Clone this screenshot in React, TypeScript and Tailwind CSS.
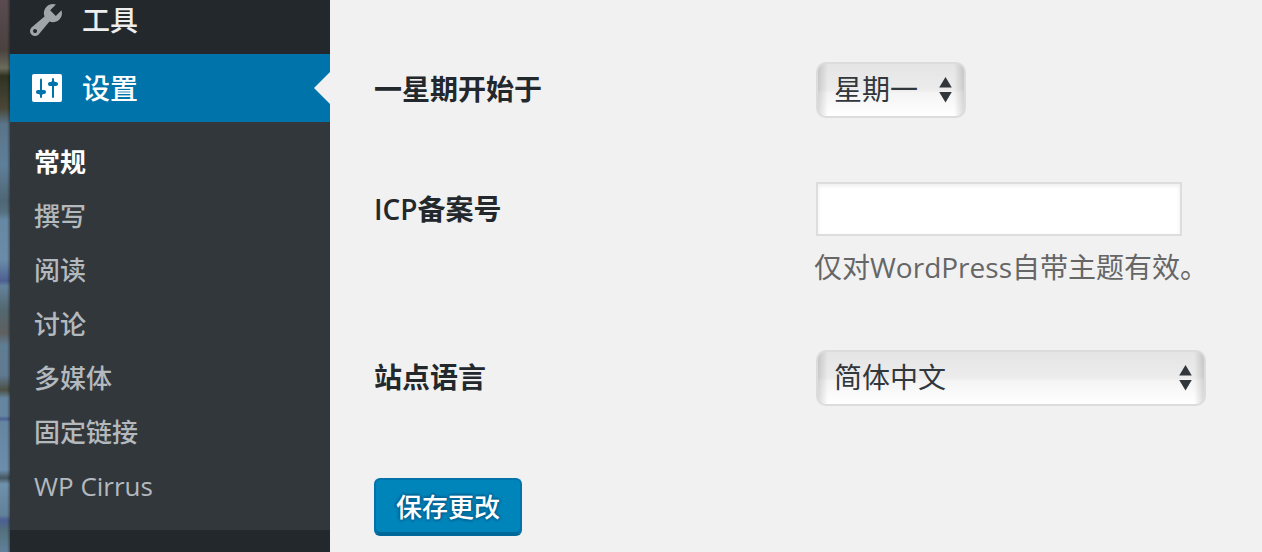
import type { ReactNode } from "react";

const submenu = ["常规", "撰写", "阅读", "讨论", "多媒体", "固定链接", "WP Cirrus"];

function itemStyle(item: string, current: boolean) {
  if (current) return "font-bold text-white";
  return /^[A-Za-z]/.test(item) ? "text-[#b4b9be]" : "font-medium text-[#b4b9be]";
}

function ToolsIcon() {
  return (
    <svg viewBox="0 0 20 20" className="size-10 shrink-0 fill-[#a0a5aa]" aria-hidden="true">
      <path d="M16.68 9.77c-1.34 1.34-3.3 1.67-4.95.99l-5.41 6.52c-.99.99-2.59.99-3.58 0s-.99-2.59 0-3.57l6.52-5.42c-.68-1.65-.35-3.61.99-4.95 1.28-1.28 3.12-1.62 4.72-1.06l-2.89 2.89 2.82 2.82 2.86-2.87c.53 1.58.18 3.39-1.08 4.65zM3.81 16.21c.4.39 1.04.39 1.43 0 .4-.4.4-1.04 0-1.43-.39-.4-1.03-.4-1.43 0-.39.39-.39 1.03 0 1.43z" />
    </svg>
  );
}

function SettingsIcon() {
  return (
    <svg viewBox="0 0 40 40" className="size-10 shrink-0" aria-hidden="true">
      <rect x="6" y="6" width="30" height="28" rx="2" fill="#fff" />
      <g fill="#0073aa">
        <rect x="14" y="10.5" width="2" height="19.5" rx="1" />
        <path d="M12 22h6c1.200 0 2 .8 2 2s-.8 2-2 2h-1l-2 2-2-2h-1c-1.200 0-2-.8-2-2s.8-2 2-2z" />
        <rect x="26" y="10" width="2" height="20" rx="1" />
        <path d="M24 18h6c1.200 0 2-.8 2-2s-.8-2-2-2h-1l-2-2-2 2h-1c-1.200 0-2 .8-2 2s.8 2 2 2z" />
      </g>
    </svg>
  );
}

function Select({ id, options, className }: { id: string; options: string[]; className: string }) {
  return (
    <div className={`relative h-14 max-w-full ${className}`}>
      <select
        id={id}
        className="size-full appearance-none rounded-[10px] border-2 border-[#dcdcdc] bg-[linear-gradient(to_right,rgba(0,0,0,0.14),transparent_10px),linear-gradient(to_left,rgba(0,0,0,0.14),transparent_10px),linear-gradient(to_bottom,#e5e5e5,#ececec_50%,#f4f4f4_55%,#ffffff)] pr-10 pb-0.5 pl-4 text-[28px] text-[#32373c]"
      >
        {options.map((o) => (
          <option key={o}>{o}</option>
        ))}
      </select>
      <svg viewBox="0 0 14 26" className="pointer-events-none absolute top-[15px] right-[13px] h-[26px] w-3.5 fill-[#32373c]" aria-hidden="true">
        <path d="M6.500 0 12.800 10.500H.2zM6.500 25.500 12.800 15H.2z" />
      </svg>
    </div>
  );
}

function Row({ id, label, className, children }: { id: string; label: string; className: string; children: ReactNode }) {
  return (
    <div className={`flex items-start ${className}`}>
      <label htmlFor={id} className="w-[442px] shrink-0 py-2 text-[28px] leading-[38px] font-semibold text-[#23282d]">
        {label}
      </label>
      <div className="min-w-0 flex-1">{children}</div>
    </div>
  );
}

export default function App() {
  return (
    <div className="flex h-screen overflow-hidden bg-[#f1f1f1] font-['Open_Sans','Noto_Sans_CJK_SC',sans-serif]">
      <div className="w-2.5 shrink-0 bg-[linear-gradient(to_right,transparent_70%,rgba(0,0,0,0.35)),linear-gradient(to_bottom,#5a4b50_0px,#4a4240_50px,#6b6b5c_68px,#30321f_76px,#383a2c_88px,#4a4636_108px,#5a7488_124px,#5e7f99_165px,#4f6675_201px,#55707f_212px,#6788a3_220px,#6a8ca8_260px,#4d5f90_281px,#63839b_286px,#536770_310px,#5f605f_333px,#5f7d93_345px,#607a92_375px,#4c5044_390px,#6585a0_398px,#6585a0_416px,#4c5f92_419px,#6585a0_422px,#6c8dab_470px,#45565f_478px,#6f91ab_484px,#62819a_515px,#4d5f92_520px,#52707c_530px,#62819a_552px)]" />

      <nav className="-mt-3.5 w-80 shrink-0 bg-[#23282d]" aria-label="管理菜单">
        <a href="#tools" className="flex h-[68px] items-center gap-4 pl-4 text-[28px] text-[#eeeeee]">
          <ToolsIcon />
          <span className="font-medium">工具</span>
        </a>
        <a href="#settings" className="relative flex h-[68px] items-center gap-4 bg-[#0073aa] pl-4 text-[28px] text-white">
          <SettingsIcon />
          <span className="font-medium">设置</span>
          <svg viewBox="0 0 16 32" className="absolute top-[18px] right-0 h-8 w-4 fill-[#f1f1f1]" aria-hidden="true">
            <path d="M16 0v32L0 16z" />
          </svg>
        </a>
        <ul className="bg-[#32373c] pt-[13px] pb-[17px]">
          {submenu.map((item, i) => (
            <li key={item}>
              <a href="#submenu" className={`flex h-[54px] items-center pl-6 text-[26px] ${itemStyle(item, i === 0)}`}>
                {item}
              </a>
            </li>
          ))}
        </ul>
      </nav>

      <main className="min-w-0 flex-1 pt-[62px] pl-11">
        <form onSubmit={(e) => e.preventDefault()}>
          <Row id="start-of-week" label="一星期开始于" className="mb-16">
            <Select id="start-of-week" options={["星期一", "星期日"]} className="w-[150px]" />
          </Row>
          <Row id="icp" label="ICP备案号" className="mb-16">
            <input
              id="icp"
              type="text"
              className="block h-[54px] w-[366px] max-w-full border-2 border-[#dddddd] bg-white px-2 text-[28px] text-[#32373c] shadow-[inset_0_2px_4px_rgba(0,0,0,0.07)]"
            />
            <p className="-ml-0.5 pt-3 text-[28px] leading-[38px] text-[#666666]">仅对WordPress自带主题有效。</p>
          </Row>
          <Row id="language" label="站点语言" className="mb-[72px]">
            <Select id="language" options={["简体中文", "English"]} className="w-[390px]" />
          </Row>
          <button
            type="submit"
            className="h-[58px] rounded-md border-2 border-[#0073aa] border-b-[#006799] bg-[#0085ba] px-5 text-[26px] font-medium text-white shadow-[inset_0_-2px_0_#006799] [text-shadow:0_-2px_2px_#006799,2px_0_2px_#006799,0_2px_2px_#006799,-2px_0_2px_#006799]"
          >
            保存更改
          </button>
        </form>
      </main>
    </div>
  );
}
